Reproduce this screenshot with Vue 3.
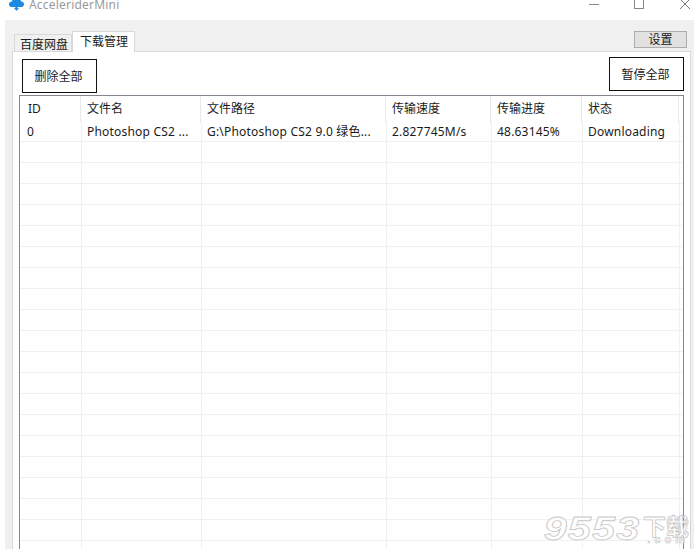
<template>
  <div class="app">
    <div class="titlebar">
      <svg class="logo" width="15" height="11" viewBox="0 0 14 10">
        <path d="M3 6.500C1 6.500 0 5.300 0 3.800 0 2.300 1.200 1.300 2.600 1.300 3-.5 5-2 7-2 9-2 11-.5 11.400 1.300 12.800 1.300 14 2.300 14 3.800 14 5.300 13 6.500 11 6.500H8V7.500H9.500L7 10 4.500 7.500H6V6.500Z" fill="#1e88e5" />
      </svg>
      <span class="title">AcceleriderMini</span>
      <div class="controls">
        <span class="ctl-min"></span>
        <span class="ctl-max"></span>
        <svg class="ctl-close" width="10" height="9" viewBox="0 0 10 9">
          <path d="M0 -1 10 9M10 -1 0 9" stroke="#777" fill="none" />
        </svg>
      </div>
    </div>

    <div class="body">
      <div class="tabbar">
        <div class="tabs">
          <div class="tab">百度网盘</div>
          <div class="tab active">下载管理</div>
        </div>
        <button class="settings">设置</button>
      </div>

      <div class="panel">
        <div class="actions">
          <button class="action left">删除全部</button>
          <button class="action right">暂停全部</button>
        </div>

        <div class="table">
          <div class="head">
            <div v-for="col in columns" :key="col" class="hcell">{{ col }}</div>
          </div>
          <div v-for="(row, i) in rows" :key="i" class="row">
            <div v-for="(cell, j) in row" :key="j" class="cell">{{ cell }}</div>
          </div>
        </div>
      </div>
    </div>

    <div class="watermark">
      <span class="wm-num">9553</span>
      <span class="wm-side">
        <span class="wm-cn">下载</span>
        <span class="wm-com">.com</span>
      </span>
    </div>
  </div>
</template>

<script setup>
const columns = ['ID', '文件名', '文件路径', '传输速度', '传输进度', '状态']

const rows = [
  ['0', 'Photoshop CS2 ...', 'G:\\Photoshop CS2 9.0 绿色...', '2.827745M/s', '48.63145%', 'Downloading']
]
for (let i = 0; i < 20; i++) {
  rows.push(['', '', '', '', '', ''])
}
</script>

<style scoped>
.app {
  position: relative;
  width: 694px;
  height: 549px;
  overflow: hidden;
  background: #fff;
  color: #1a1a1a;
  font-family: "Noto Sans", "Noto Sans CJK SC", sans-serif;
  font-size: 12px;
}

.titlebar {
  display: flex;
  height: 20px;
  padding-left: 9px;
  overflow: hidden;
}

.logo {
  margin-right: 5px;
}

.title {
  color: #9a9a9a;
  font-size: 12px;
  line-height: 9px;
  letter-spacing: 0.2px;
}

.controls {
  display: flex;
  margin-left: auto;
  padding-right: 4px;
}

.ctl-min {
  width: 10px;
  height: 1px;
  margin-top: 4px;
  margin-right: 35px;
  background: #888;
}

.ctl-max {
  width: 10px;
  height: 9px;
  margin-right: 36px;
  border: 1px solid #888;
  border-top: none;
  box-sizing: border-box;
}

.body {
  display: flex;
  flex-direction: column;
  height: 529px;
  margin-left: 5px;
  padding: 11px 3px 0 7px;
  background: #f0f0f0;
}

.tabbar {
  display: flex;
  justify-content: space-between;
  align-items: flex-start;
  height: 20px;
}

.tabs {
  display: flex;
  align-items: flex-end;
  height: 21px;
  padding-left: 2px;
}

.tab {
  height: 18px;
  padding: 0 3px 0 5px;
  border: 1px solid #d9d9d9;
  border-bottom: none;
  line-height: 20px;
  box-sizing: border-box;
  width: 58px;
  white-space: nowrap;
}

.tab.active {
  position: relative;
  z-index: 1;
  width: 63px;
  height: 21px;
  padding-left: 7px;
  background: #fff;
  border-width: 1px;
  line-height: 20px;
}

.settings {
  width: 53px;
  height: 17px;
  margin-right: 4px;
  padding: 0;
  border: 1px solid #adadad;
  background: #e1e1e1;
  color: #1a1a1a;
  font: inherit;
  line-height: 15px;
}

.panel {
  flex: 1;
  min-height: 0;
  padding: 5px 6px 0;
  border: 1px solid #d9d9d9;
  background: #fff;
}

.actions {
  display: flex;
  justify-content: space-between;
  height: 38px;
  padding-left: 3px;
}

.action {
  width: 75px;
  height: 34px;
  padding: 0 2px 0 0;
  border: 1px solid #111;
  background: #fff;
  color: #1a1a1a;
  font: inherit;
}

.action.left {
  margin-top: 2px;
}

.table {
  width: 665px;
  height: 470px;
  overflow: hidden;
  border: 1px solid #828790;
  border-bottom: none;
  box-sizing: border-box;
}

.head,
.row {
  display: grid;
}

.head {
  grid-template-columns: 61px 120px 185px 105px 91px 97px;
  height: 25px;
}

.hcell {
  padding-left: 6px;
  border-right: 1px solid #e8e8e8;
  line-height: 26px;
  box-sizing: border-box;
}

.hcell:first-child {
  padding-left: 8px;
}

.row {
  grid-template-columns: 62px 120px 185px 105px 91px 97px 1fr;
  height: 21px;
  border-bottom: 1px solid #f0f0f0;
  box-sizing: border-box;
}

.cell {
  padding-left: 5px;
  border-right: 1px solid #f0f0f0;
  line-height: 22px;
  letter-spacing: 0.2px;
  white-space: nowrap;
  box-sizing: border-box;
}

.cell:first-child {
  padding-left: 7px;
}

.watermark {
  position: absolute;
  right: 5px;
  bottom: 6px;
  display: flex;
  gap: 3px;
  height: 27px;
  color: rgba(255, 255, 255, 0.75);
  -webkit-text-stroke: 0.8px #c8c8c8;
  font-family: "Liberation Sans", sans-serif;
  font-weight: 700;
  font-style: italic;
}

.wm-num {
  font-size: 33px;
  line-height: 25px;
  letter-spacing: 1px;
  transform: scaleX(1.25);
  transform-origin: right center;
}

.wm-side {
  display: flex;
  flex-direction: column;
  align-items: flex-end;
}

.wm-cn {
  font-family: "Noto Sans CJK SC", sans-serif;
  font-size: 23px;
  font-style: normal;
  line-height: 19px;
}

.wm-com {
  font-size: 11px;
  line-height: 8px;
  letter-spacing: 4px;
  font-style: normal;
  -webkit-text-stroke-width: 0.6px;
}
</style>

<style>
html,
body {
  margin: 0;
  background: #fff;
  overflow: hidden;
}
</style>
